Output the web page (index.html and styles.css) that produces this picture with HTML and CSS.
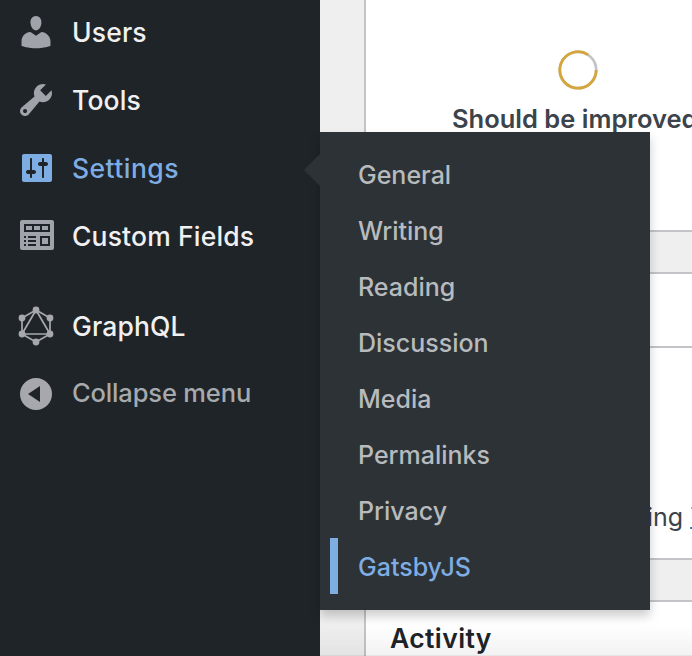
FILE: index.html
```html
<!DOCTYPE html>
<html lang="en">
<head>
<meta charset="utf-8">
<title>Dashboard</title>
<link rel="stylesheet" href="styles.css">
</head>
<body>
<div class="app">
  <nav class="sidebar">
    <a class="item users"><svg class="icon" viewBox="0 0 20 20"><path d="M10 9.25c-2.27 0-2.73-3.44-2.73-3.44C7 4.02 7.82 2 9.97 2c2.16 0 2.98 2.02 2.71 3.81 0 0-.41 3.44-2.68 3.44zm0 2.57L12.72 10c2.39 0 4.52 2.33 4.52 4.53v2.49s-3.65 1.13-7.24 1.13c-3.65 0-7.24-1.13-7.24-1.13v-2.49c0-2.25 1.94-4.48 4.47-4.48z"/></svg><span>Users</span></a>
    <a class="item tools"><svg class="icon" viewBox="0 0 20 20"><path d="M16.68 9.77c-1.34 1.34-3.3 1.67-4.95.99l-5.41 6.52c-.99.99-2.59.99-3.58 0s-.99-2.59 0-3.57l6.52-5.42c-.68-1.65-.35-3.61.99-4.95 1.28-1.28 3.12-1.62 4.72-1.06l-2.89 2.89 2.82 2.82 2.86-2.87c.53 1.58.18 3.39-1.08 4.65zM3.81 16.21c.4.39 1.04.39 1.43 0 .4-.4.4-1.04 0-1.43-.39-.4-1.03-.4-1.43 0-.39.39-.39 1.03 0 1.43z"/></svg><span>Tools</span></a>
    <div class="item settings current"><svg class="icon" viewBox="0 0 20 20"><path d="M18 16V4c0-.55-.45-1-1-1H4c-.55 0-1 .45-1 1v12c0 .55.45 1 1 1h13c.55 0 1-.45 1-1zM8 11h1c.55 0 1 .45 1 1s-.45 1-1 1H8v1.5c0 .28-.22.5-.5.5s-.5-.22-.5-.5V13H6c-.55 0-1-.45-1-1s.45-1 1-1h1V5.500c0-.28.22-.5.5-.5s.5.22.5.5V11zm5-2h-1c-.55 0-1-.45-1-1s.45-1 1-1h1V5.500c0-.28.22-.5.5-.5s.5.22.5.5V7h1c.55 0 1 .45 1 1s-.45 1-1 1h-1v5.500c0 .28-.22.5-.5.5s-.5-.22-.5-.5V9z"/></svg><span>Settings</span>
      <div class="submenu">
        <a>General</a>
        <a>Writing</a>
        <a>Reading</a>
        <a>Discussion</a>
        <a>Media</a>
        <a>Permalinks</a>
        <a>Privacy</a>
        <a class="active">GatsbyJS</a>
      </div>
    </div>
    <a class="item fields"><svg class="icon" viewBox="0 0 20 20"><path fill-rule="evenodd" d="M3 2h15q1 0 1 1v13q0 1-1 1H3q-1 0-1-1V3q0-1 1-1zM4 4v4h13V4zM5 5h3v2H5zM9 5h3v2H9zM13 5h3v2h-3zM4 10h1v1H4zM6 10h4v1H6zM4 12h1v1H4zM6 12h4v1H6zM4 14h1v1H4zM6 14h4v1H6zM12 10h5v5h-5zM13 11h3v3h-3z"/></svg><span>Custom Fields</span></a>
    <a class="item graphql"><svg class="icon" viewBox="0 0 40 40"><path class="wire" d="M20 4 34 12V28L20 36 6 28V12zM20 4 34 28H6z"/><circle cx="20" cy="4" r="3.4"/><circle cx="34" cy="12" r="3.4"/><circle cx="34" cy="28" r="3.4"/><circle cx="20" cy="36" r="3.4"/><circle cx="6" cy="28" r="3.4"/><circle cx="6" cy="12" r="3.4"/></svg><span>GraphQL</span></a>
    <a class="item collapse"><svg class="icon" viewBox="0 0 40 40"><path fill-rule="evenodd" d="M20 4a16 16 0 1 0 0 32 16 16 0 1 0 0-32zM24 12v16L12 20z"/></svg><span>Collapse menu</span></a>
  </nav>
  <main class="content">
    <section class="card health">
      <svg class="ring" viewBox="0 0 40 40"><circle class="track" cx="20" cy="20" r="18.200"/><path class="progress" d="M38.200 20A18.200 18.200 0 1 1 30.200 4.900"/></svg>
      <div class="status">Should be improved</div>
    </section>
    <section class="card glance">
      <header class="card-head"></header>
      <p class="note">ing <a>T</a></p>
    </section>
    <section class="card activity"><h2>Activity</h2></section>
  </main>
</div>
</body>
</html>
```
FILE: styles.css
```css
* { box-sizing: border-box; }
body { margin: 0; font-family: Inter, "Liberation Sans", sans-serif; }
.app { position: relative; display: flex; width: 692px; height: 656px; overflow: hidden; background: #efefef; }
.app::after { content: ""; position: absolute; left: 320px; right: 0; bottom: 0; height: 30px; border-bottom: 1px solid rgba(0,0,0,.1); background: linear-gradient(transparent, rgba(0,0,0,.05)); }

.sidebar { position: relative; z-index: 1; flex: 0 0 320px; background: #1f2428; }
.item { position: relative; display: flex; align-items: center; height: 68px; padding-left: 16px; gap: 16px; color: #f0f0f1; font-size: 26.5px; font-weight: 500; line-height: 36px; white-space: nowrap; }
.item > span { letter-spacing: .15px; }
.users { height: 66px; padding-bottom: 2px; }
.icon { flex: none; width: 40px; height: 40px; fill: #a0a3a9; }
.current { color: #7eade3; }
.current > span { letter-spacing: .45px; }
.current .icon { fill: #7eade3; }
.graphql { margin-top: 22px; }
.collapse { color: #a7aaad; font-size: 25.5px; }
.collapse > span { margin-top: -2px; letter-spacing: -.15px; }
.collapse .icon, .graphql .icon { fill: #a7a8ad; overflow: visible; }
.wire { fill: none; stroke: #a7a8ad; stroke-width: 1.7; }

.submenu { position: absolute; left: 320px; top: -2px; width: 330px; height: 478px; padding-top: 14px; background: #2d3236; box-shadow: 0 6px 10px rgba(0,0,0,.2); color: #b7bbbe; font-size: 25px; }
.submenu::before { content: ""; position: absolute; right: 100%; top: 22px; border: 16px solid transparent; border-right-color: #2d3236; border-left-width: 0; }
.submenu a { display: flex; align-items: center; height: 56px; margin-left: 10px; padding: 2px 0 0 28px; }
.submenu .active { padding-left: 20px; border-left: 8px solid #7eade3; color: #7eade3; }

.content { flex: none; width: 420px; padding-left: 44px; }
.card { border: 2px solid #c3c4c7; background: #fff; }
.health { display: flex; flex-direction: column; align-items: center; height: 232px; padding: 50px 0 0 52px; border-top: 0; }
.ring { width: 40px; height: 40px; fill: none; stroke-width: 2.8; }
.track { stroke: #c3c4c7; }
.progress { stroke: #d4a63b; }
.status { width: 252px; margin: 13px 0 0; color: #3c434a; font-size: 25.5px; font-weight: 600; line-height: 32px; white-space: nowrap; }
.glance { height: 288px; margin-top: 40px; }
.card-head { height: 74px; border-bottom: 2px solid #c3c4c7; }
.note { margin: 151px 0 0 281px; color: #3c434a; font-size: 25px; line-height: 36px; white-space: nowrap; }
.note a { color: #2271b1; text-decoration: underline; text-decoration-thickness: 2px; }
.activity { height: 100px; margin-top: 40px; }
.activity h2 { margin: 18px 0 0 24px; color: #1d2327; font-size: 26.5px; font-weight: 600; letter-spacing: .4px; line-height: 36px; }
```
